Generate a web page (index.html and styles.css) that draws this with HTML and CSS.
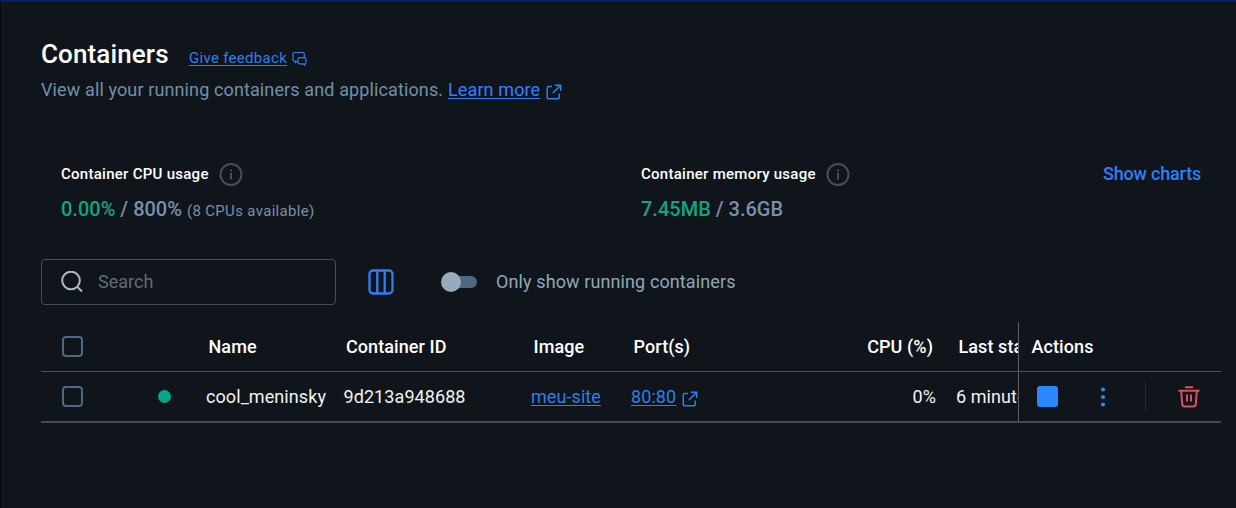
FILE: index.html
```
<!DOCTYPE html>
<html lang="en">
<head>
<meta charset="utf-8">
<title>Containers</title>
<link rel="stylesheet" href="styles.css">
</head>
<body>
<main class="page">
  <header class="heading">
    <h1 class="title">Containers</h1>
    <a class="link feedback"><span class="u">Give feedback</span>
      <svg class="chat" width="16" height="16" viewBox="0 0 16 16" fill="none" stroke="currentColor" stroke-width="1.2" stroke-linejoin="round" stroke-linecap="round"><path d="M4.500 10.500 3.400 11.800V10H2.300A1.300 1.300 0 0 1 1 8.700V2.800A1.300 1.300 0 0 1 2.300 1.500H11A1.300 1.300 0 0 1 12.300 2.800V6.500"/><path d="M7.300 6.700H12.700A1.300 1.300 0 0 1 14 8V11.500A1.300 1.300 0 0 1 12.700 12.800V14.300L11 12.800H7.300A1.300 1.300 0 0 1 6 11.500V8A1.300 1.300 0 0 1 7.300 6.700Z"/></svg></a>
  </header>
  <p class="intro"><span class="intro-text">View all your running containers and applications.</span><a class="link learn"><span class="u">Learn more</span><svg class="ext" width="16" height="16" viewBox="0 0 16 16" fill="none" stroke="currentColor" stroke-width="1.500"><path d="M6 2.500H3A1.800 1.800 0 0 0 1.200 4.300V13A1.800 1.800 0 0 0 3 14.800H11.500A1.800 1.800 0 0 0 13.300 13V9.500M8.800 1.200H14.700V7M14.500 1.400 6.700 9.200"/></svg></a></p>

  <section class="stats">
    <div class="stat">
      <div class="stat-label"><span>Container CPU usage</span><svg width="24" height="24" viewBox="0 0 24 24" fill="none" stroke="#474d55" stroke-width="2"><circle cx="12" cy="12.500" r="10.500"/><path d="M12 11V17.500M12 7.500V9.500"/></svg></div>
      <div class="stat-value"><span class="green">0.00%</span> / 800% <small>(8 CPUs available)</small></div>
    </div>
    <div class="stat">
      <div class="stat-label"><span>Container memory usage</span><svg width="24" height="24" viewBox="0 0 24 24" fill="none" stroke="#474d55" stroke-width="2"><circle cx="12" cy="12.500" r="10.500"/><path d="M12 11V17.500M12 7.500V9.500"/></svg></div>
      <div class="stat-value"><span class="green">7.45MB</span> / 3.6GB</div>
    </div>
    <a class="charts">Show charts</a>
  </section>

  <section class="toolbar">
    <div class="search"><svg width="22" height="22" viewBox="0 0 22 22" fill="none" stroke="#aab9c5" stroke-width="2"><circle cx="10" cy="9.500" r="8.800"/><path d="M16 15.500 21 20.500"/></svg><span>Search</span></div>
    <svg class="columns" width="26" height="26" viewBox="0 0 26 26" fill="none" stroke="#347df0" stroke-width="2.300"><rect x="1.500" y="1.500" width="23" height="23" rx="3.500"/><path d="M9.300 2V24M16.700 2V24"/></svg>
    <div class="switch"><i class="knob"></i></div>
    <span class="switch-label">Only show running containers</span>
  </section>

  <section class="table">
    <div class="row head">
      <div class="cell check"><i class="box"></i></div><div class="cell"></div>
      <div class="cell">Name</div><div class="cell">Container ID</div><div class="cell">Image</div><div class="cell">Port(s)</div>
      <div class="cell cpu">CPU (%)</div><div class="cell last">Last started</div><div class="cell actions">Actions</div>
    </div>
    <div class="row item">
      <div class="cell check"><i class="box"></i></div><div class="cell"><i class="dot"></i></div>
      <div class="cell">cool_meninsky</div><div class="cell">9d213a948688</div>
      <div class="cell"><a class="link u">meu-site</a></div>
      <div class="cell"><a class="link port"><span class="u">80:80</span><svg class="ext" width="16" height="16" viewBox="0 0 16 16" fill="none" stroke="currentColor" stroke-width="1.500"><path d="M6 2.500H3A1.800 1.800 0 0 0 1.200 4.300V13A1.800 1.800 0 0 0 3 14.800H11.500A1.800 1.800 0 0 0 13.300 13V9.500M8.800 1.200H14.700V7M14.500 1.400 6.700 9.200"/></svg></a></div>
      <div class="cell cpu">0%</div><div class="cell last">6 minutes ago</div>
      <div class="cell actions"><i class="stop"></i><svg class="dots" width="6" height="20" viewBox="0 0 6 20" fill="#2e86f0"><circle cx="3" cy="2.500" r="2.100"/><circle cx="3" cy="10" r="2.100"/><circle cx="3" cy="17.500" r="2.100"/></svg><i class="divider"></i><svg class="trash" width="22" height="22" viewBox="0 0 22 22" fill="none" stroke="#dc4f63" stroke-width="2"><path d="M7 1.300H15M.5 4.800H21.500M3.200 5 4.200 18.200A2.600 2.600 0 0 0 6.800 20.600H15.200A2.600 2.600 0 0 0 17.800 18.200L18.800 5M9 8.500V15.500M13 8.500V15.500"/></svg></div>
    </div>
  </section>
</main>
</body>
</html>
```
FILE: styles.css
```
* { box-sizing: border-box; }
body { margin: 0; background: #10151b; font-family: Roboto, sans-serif; }
svg { display: block; flex: none; }
.page { height: 508px; padding: 35px 15px 0 40px; border-top: 2px solid #00216b; border-left: 1px solid #07090c; overflow: hidden; }
.heading { display: flex; height: 34px; align-items: center; }
.title { margin: 0; width: 148px; font-size: 26px; font-weight: 500; line-height: 34px; letter-spacing: .12px; color: #fff; white-space: nowrap; }
.link { color: #2f7fe8; }
.u { text-decoration: underline; text-decoration-thickness: 1px; text-underline-offset: 2px; }
.feedback { display: flex; gap: 5px; align-items: center; padding-top: 7px; font-size: 15px; letter-spacing: .3px; }
.chat { margin-top: 3px; }
.intro { display: flex; align-items: center; margin: 0; padding-top: 6px; height: 32px; font-size: 18px; line-height: 26px; letter-spacing: .12px; color: #7090a8; white-space: nowrap; }
.intro-text { width: 407px; }
.learn { display: flex; gap: 6px; align-items: center; color: #347fff; }
.learn .ext, .port .ext { margin-top: 4px; }
.learn .ext { color: #2f7fe8; }
.stats { display: grid; grid-template-columns: 580px 1fr auto; padding: 58px 20px 0; height: 156px; }
.stat-label { display: flex; align-items: center; gap: 10px; height: 26px; font-size: 15px; font-weight: 500; letter-spacing: .27px; color: #fff; }
.stat-value { padding-top: 9px; font-size: 20px; line-height: 26px; font-weight: 500; color: #7890aa; }
.stat-value small { font-size: 15px; font-weight: 400; letter-spacing: .33px; }
.green { color: #12a482; }
.charts { font-size: 18px; line-height: 26px; font-weight: 500; letter-spacing: -.2px; color: #2f7ff5; }
.toolbar { display: flex; align-items: center; height: 46px; }
.search { display: flex; align-items: center; gap: 15px; width: 295px; height: 46px; padding-left: 19px; border: 1px solid #484e55; border-radius: 4px; font-size: 18px; color: #626a72; }
.search span { padding-bottom: 2px; }
.columns { margin-left: 32px; }
.switch { display: flex; align-items: center; width: 31px; height: 12px; margin-left: 52px; border-radius: 6px; background: #4d687f; }
.knob { flex: none; width: 20px; height: 20px; margin-left: -5px; border-radius: 50%; background: #96acbb; }
.switch-label { margin-left: 19px; padding-bottom: 2px; font-size: 18px; letter-spacing: .11px; color: #91a7b5; }
.table { margin-top: 17px; font-size: 18px; line-height: 26px; letter-spacing: .08px; color: #f1f2f3; }
.row { display: grid; grid-template-columns: 117px 48px 137.500px 187.500px 100px 145px 160px 82px 1fr; height: 50px; border-bottom: 1px solid #4b5256; }
.item { height: 51px; border-bottom: 2px solid #434b51; }
.cell { display: flex; align-items: center; white-space: nowrap; min-width: 0; }
.head { font-weight: 500; color: #fff; }
.head .cell { padding-left: 2.5px; }
.row .check { padding-left: 21px; }
.box { width: 21px; height: 21px; border: 2px solid #4d6880; border-radius: 4px; }
.dot { width: 13px; height: 13px; border-radius: 50%; background: #04a689; }
.port { display: flex; align-items: center; gap: 6px; }
.cpu { justify-content: flex-end; }
.head .cpu { padding-right: 3px; }
.last { padding-left: 20px; overflow: hidden; }
.head .last { padding-left: 22.5px; }
.actions { border-left: 1px solid #5a6064; }
.head .actions { padding-left: 12.5px; }
.item .actions { padding-left: 18px; }
.stop { width: 21px; height: 21px; border-radius: 3px; background: #2b87ff; }
.dots { margin-left: 41.5px; }
.divider { width: 1px; height: 30px; margin-left: 39.5px; background: #262c32; }
.trash { margin-left: 31.5px; }
```
